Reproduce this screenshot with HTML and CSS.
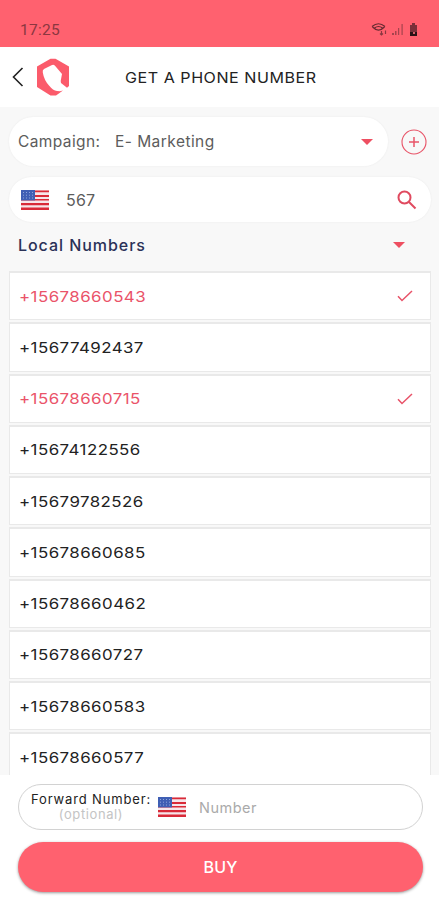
FILE: index.html
```html
<!DOCTYPE html>
<html lang="en">
<head>
<meta charset="utf-8">
<title>Get a phone number</title>
<link rel="stylesheet" href="styles.css">
</head>
<body>
<svg class="defs" width="0" height="0">
  <symbol id="flag" viewBox="0 0 28 20">
    <path fill="#f6e6ea" d="M0 0h28v20H0z"/>
    <path fill="#d92a38" d="M0 .5h28v1.800H0zM0 5h28v2H0zM0 9h28v1.500H0zM0 13h28v2.200H0zM0 17.500h28V20H0z"/>
    <path fill="#3f5fb4" d="M0 0h14v10.400H0z"/>
    <path stroke="#8fa5da" stroke-width="1" stroke-dasharray="1 2" d="M2 2.500h11M2 5.200h11M2 8h11"/>
  </symbol>
  <symbol id="check" viewBox="0 0 16 12">
    <path fill="none" stroke="#e85268" stroke-width="1.500" d="M1 6.200l4 4.300L15 1"/>
  </symbol>
</svg>
<div class="status">
  <span class="time">17:25</span>
  <svg class="system" width="50" height="16" viewBox="0 0 50 16">
    <g fill="none" stroke="#652a31" stroke-width="1.200">
      <path d="M1 4.500Q7.500-1 14 4.500M3.500 6Q7.500 3 11.500 6M1.500 5Q7.500 11 13.500 5"/>
      <path stroke="#8a3740" d="M10.500 9v4M9 11.500l1.500 1.500 1.500-1.500M14.500 12V8.500"/>
    </g>
    <g fill="#a5434d"><path d="M21 11h2v2h-2zM24 9h1.500v4H24zM27 6h1.200v7H27zM30.500 2h1.200v11h-1.200z"/></g>
    <path fill="#7a303a" d="M41 1h3v2h2v7h-7V3h2z"/>
    <path fill="#2c1216" d="M39 10h7v4h-7z"/>
    <path fill="#d65b68" d="M42 10h2v2h-2z"/>
  </svg>
</div>
<header class="header">
  <svg class="back" width="12" height="20" viewBox="0 0 12 20"><path fill="none" stroke="#222" stroke-width="1.600" d="M10.500 1L1.500 10l9 9"/></svg>
  <svg class="logo" width="34" height="38" viewBox="0 0 34 38">
    <path fill="#fb5b6b" d="M14.500.8h5L33 8.500V28l-2 1.800-6-4.800-.3-2L26 16l-7-8.300q-1.500-1.500-3.500-.5L8 11q-1.800 1-1.200 3.500Q8 22 13 27.500q4 5 8 5.500l3 .2 3-.8-7 5h-5.500L1 29V8.500z"/>
  </svg>
  <h1 class="title">GET A PHONE NUMBER</h1>
</header>
<main class="content">
  <div class="campaign-row">
    <div class="pill campaign"><span class="campaign-label">Campaign:</span><span class="campaign-value">E- Marketing</span><i class="caret"></i></div>
    <svg class="add" width="26" height="26" viewBox="0 0 26 26"><g fill="none" stroke="#e85468"><circle cx="13" cy="13" r="12" stroke-width="1.100"/><path stroke-width="1.500" d="M13 8v10M8 13h10"/></g></svg>
  </div>
  <div class="pill search">
    <svg class="flag" width="28" height="20"><use href="#flag"/></svg>
    <span class="query">567</span>
    <svg class="lens" width="20" height="20" viewBox="0 0 20 20"><g fill="none" stroke="#e04a5f" stroke-width="2"><circle cx="7.500" cy="7.500" r="6"/><path d="M12 12l6.500 6.500"/></g></svg>
  </div>
  <div class="group"><span class="group-name">Local Numbers</span><i class="caret"></i></div>
  <div class="list">
    <div class="item picked"><span class="number">+15678660543</span><svg width="16" height="12"><use href="#check"/></svg></div>
    <div class="item"><span class="number">+15677492437</span></div>
    <div class="item picked"><span class="number">+15678660715</span><svg width="16" height="12"><use href="#check"/></svg></div>
    <div class="item"><span class="number">+15674122556</span></div>
    <div class="item"><span class="number">+15679782526</span></div>
    <div class="item"><span class="number">+15678660685</span></div>
    <div class="item"><span class="number">+15678660462</span></div>
    <div class="item"><span class="number">+15678660727</span></div>
    <div class="item"><span class="number">+15678660583</span></div>
    <div class="item"><span class="number">+15678660577</span></div>
  </div>
</main>
<footer class="footer">
  <div class="forward">
    <div class="forward-label"><span class="forward-name">Forward Number:</span><span class="optional">(optional)</span></div>
    <svg class="flag" width="28" height="20"><use href="#flag"/></svg>
    <span class="placeholder">Number</span>
  </div>
  <div class="buy">BUY</div>
</footer>
</body>
</html>
```
FILE: styles.css
```css
* { box-sizing: border-box; }
body {
  margin: 0;
  width: 439px;
  height: 900px;
  overflow: hidden;
  display: flex;
  flex-direction: column;
  background: #fff;
  color: #222;
  font-family: Inter, "Open Sans", sans-serif;
}
svg { display: block; flex: none; }
.defs { position: absolute; }
.status {
  flex: none;
  height: 47px;
  padding: 12px 18px 0 20px;
  display: flex;
  align-items: center;
  justify-content: space-between;
  background: #ff616f;
}
.time { font: 15.5px Roboto, sans-serif; letter-spacing: 0.3px; color: #8b3740; }
.header {
  flex: none;
  height: 60px;
  padding-left: 12px;
  display: flex;
  align-items: center;
}
.logo { margin-left: 12px; }
.title {
  margin: 0 0 0 55px;
  font-size: 15px;
  font-weight: 400;
  letter-spacing: 0.5px;
  white-space: nowrap;
  transform: scaleX(1.071);
  transform-origin: left;
}
.content {
  flex: none;
  height: 668px;
  padding: 10px 8px 0 9px;
  overflow: hidden;
  background: #f8f8f8;
}
.campaign-row { display: flex; align-items: center; gap: 13px; }
.pill { display: flex; align-items: center; background: #fff; border-radius: 25px; box-shadow: 0 0 2px #e9e9e9; }
.campaign { width: 379px; height: 49px; padding: 0 15px 0 9px; font-size: 15.5px; color: #5c5c5c; }
.campaign-label { width: 97px; letter-spacing: 0.4px; }
.campaign-value { letter-spacing: 0.45px; }
.caret { width: 0; height: 0; margin-left: auto; border: 6px solid transparent; border-top-color: #ee4f61; border-bottom: 0; }
.search { height: 45px; margin-top: 11px; padding: 0 14px 0 12px; }
.query { margin-left: 17px; font-size: 16px; letter-spacing: 0.2px; color: #5c5c5c; }
.lens { margin-left: auto; }
.group { height: 49px; padding: 0 26px 4px 9px; display: flex; align-items: center; font-size: 16px; font-weight: 450; color: #2a3157; }
.group-name { letter-spacing: 0.95px; }
.list { display: flex; flex-direction: column; gap: 2px; }
.item {
  flex: none;
  height: 49.25px;
  padding: 0 17px 0 9px;
  display: flex;
  align-items: center;
  justify-content: space-between;
  background: #fff;
  border: 1.5px solid #e9e9e9;
  border-top-width: 2px;
}
.number {
  font-size: 15px;
  letter-spacing: 0.4px;
  transform: scaleX(1.125);
  transform-origin: left;
}
.picked { color: #ea5369; }
.footer { flex: none; padding: 9px 16px 0 18px; }
.forward { height: 46px; padding-left: 11px; display: flex; align-items: center; border: 1px solid #d2d2d2; border-radius: 23px; }
.forward-label { width: 122px; display: flex; flex-direction: column; align-items: center; line-height: 15px; }
.forward-name { font-size: 13px; letter-spacing: 0.85px; white-space: nowrap; }
.optional { font-size: 13px; letter-spacing: 0.6px; color: #c4c4c4; }
.forward .flag { margin-left: 6px; }
.placeholder { margin-left: 13px; font-size: 14.5px; letter-spacing: 0.5px; color: #aaa; }
.buy { height: 50px; margin-top: 12px; display: flex; align-items: center; justify-content: center; background: #ff616f; border-radius: 25px; box-shadow: 0 1px 3px #999; color: #fff; font-size: 16px; font-weight: 500; letter-spacing: 0.2px; }
```
